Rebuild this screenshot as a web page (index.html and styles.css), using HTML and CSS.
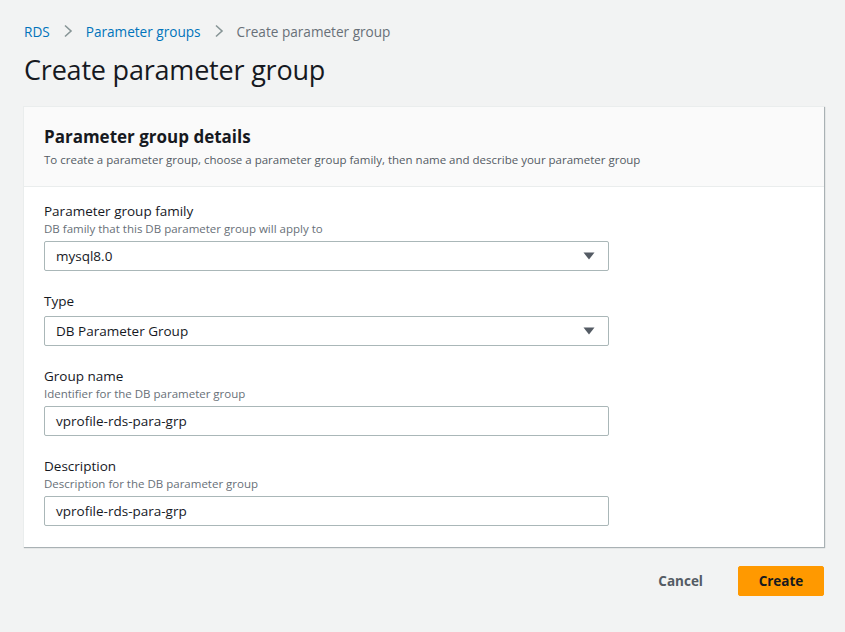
FILE: index.html
```html
<!DOCTYPE html>
<html lang="en">
<head>
<meta charset="utf-8">
<title>Create parameter group</title>
<link rel="stylesheet" href="styles.css">
</head>
<body>
<div class="page">
  <nav class="breadcrumbs">
    <a class="crumb-link" href="#">RDS</a>
    <svg class="chev" width="10" height="14" viewBox="0 0 10 14"><path d="M2 1.5 L8 7 L2 12.5" fill="none" stroke="#879596" stroke-width="1.6"/></svg>
    <a class="crumb-link" href="#">Parameter groups</a>
    <svg class="chev" width="10" height="14" viewBox="0 0 10 14"><path d="M2 1.5 L8 7 L2 12.5" fill="none" stroke="#879596" stroke-width="1.6"/></svg>
    <span class="crumb-current">Create parameter group</span>
  </nav>
  <h1 class="title">Create parameter group</h1>
  <section class="card">
    <header class="card-header">
      <h2 class="card-title">Parameter group details</h2>
      <p class="card-desc">To create a parameter group, choose a parameter group family, then name and describe your parameter group</p>
    </header>
    <div class="card-body">
      <div class="field">
        <div class="label">Parameter group family</div>
        <div class="hint">DB family that this DB parameter group will apply to</div>
        <div class="control select"><span>mysql8.0</span><svg class="caret" width="12" height="8" viewBox="0 0 12 8"><path d="M0.5 0.5 H11.5 L6 7.5 Z" fill="#545b64"/></svg></div>
      </div>
      <div class="field">
        <div class="label">Type</div>
        <div class="control select"><span>DB Parameter Group</span><svg class="caret" width="12" height="8" viewBox="0 0 12 8"><path d="M0.5 0.5 H11.5 L6 7.5 Z" fill="#545b64"/></svg></div>
      </div>
      <div class="field">
        <div class="label">Group name</div>
        <div class="hint">Identifier for the DB parameter group</div>
        <div class="control"><span>vprofile-rds-para-grp</span></div>
      </div>
      <div class="field">
        <div class="label">Description</div>
        <div class="hint">Description for the DB parameter group</div>
        <div class="control"><span>vprofile-rds-para-grp</span></div>
      </div>
    </div>
  </section>
  <div class="actions">
    <button class="btn-cancel">Cancel</button>
    <button class="btn-primary">Create</button>
  </div>
</div>
</body>
</html>
```
FILE: styles.css
```css
html, body {
  margin: 0;
  padding: 0;
  background: #f2f3f3;
  font-family: "Open Sans", "Noto Sans", sans-serif;
  color: #16191f;
}
.page {
  padding: 20px 21px 0 23px;
}
.breadcrumbs {
  display: flex;
  align-items: center;
  height: 22px;
  font-size: 13.6px;
  padding-left: 1px;
}
.crumb-link {
  color: #0073bb;
  text-decoration: none;
}
.chev {
  margin: 0 13px 0 13px;
}
.crumb-current {
  color: #687078;
}
.title {
  margin: 8px 0 0 1px;
  font-size: 27px;
  font-weight: 400;
  line-height: 40px;
  height: 46px;
  letter-spacing: -0.2px;
}
.card {
  margin-top: 10px;
  background: #fff;
  border-top: 1px solid #eaeded;
  border-left: 1px solid #eaeded;
  box-shadow: 1px 1px 1px 0 rgba(0, 28, 36, 0.3);
  width: 800px;
}
.card-header {
  background: #fafafa;
  border-bottom: 1px solid #eaeded;
  padding: 18px 20px 18px 20px;
}
.card-title {
  margin: 0;
  font-size: 17px;
  font-weight: 700;
  line-height: 24px;
}
.card-desc {
  margin: 3px 0 0 0;
  font-size: 11.5px;
  line-height: 16px;
  color: #545b64;
}
.card-body {
  padding: 14px 20px 21px 20px;
  display: flex;
  flex-direction: column;
  gap: 20px;
}
.label {
  font-size: 13.5px;
  line-height: 20px;
}
.hint {
  font-size: 11.5px;
  line-height: 15px;
  color: #687078;
}
.control {
  margin-top: 5px;
  height: 28px;
  border: 1px solid #aab7b8;
  border-radius: 2px;
  display: flex;
  align-items: center;
  justify-content: space-between;
  padding: 0 13px 0 11px;
  box-sizing: content-box;
  width: 539px;
  font-size: 13.5px;
}
.caret {
  display: block;
}
.actions {
  display: flex;
  justify-content: flex-end;
  align-items: center;
  margin-top: 19px;
  width: 801px;
}
.btn-cancel {
  background: none;
  border: none;
  font-family: inherit;
  font-size: 13.5px;
  font-weight: 700;
  color: #545b64;
  padding: 4px 20px;
  margin-right: 15px;
}
.btn-primary {
  background: #ff9900;
  border: 1px solid #ff9900;
  border-radius: 2px;
  font-family: inherit;
  font-size: 13.5px;
  font-weight: 700;
  color: #16191f;
  width: 86px;
  height: 30px;
}
```
